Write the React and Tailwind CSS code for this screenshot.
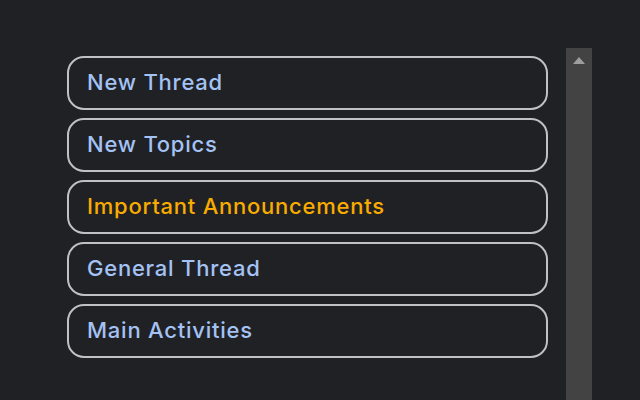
const App = () => {
  const items = [
    { label: 'New Thread' },
    { label: 'New Topics' },
    { label: 'Important Announcements', active: true },
    { label: 'General Thread' },
    { label: 'Main Activities' },
  ];

  return (
    <div className="w-[640px] h-[400px] overflow-hidden bg-[#202124] flex" style={{ fontFamily: 'Inter, "Noto Sans", sans-serif' }}>
      {/* Menu list */}
      <div className="pl-[67px] pt-[56px] flex flex-col gap-2">
        {items.map((item, index) => (
          <button
            key={index}
            className={`w-[481px] h-[54px] rounded-[17px] border-2 border-[#bfc1c4] flex items-center pl-[18px] pb-[1px] text-[22px] tracking-[0.035em] font-medium text-left ${
              item.active ? 'text-[#f9ab00]' : 'text-[#a4c2f4]'
            }`}
          >
            {item.label}
          </button>
        ))}
      </div>

      {/* Scrollbar */}
      <div className="ml-[18px] mt-[48px] w-[26px] bg-[#434343] flex justify-center pt-[9px]">
        <svg width="12" height="7" viewBox="0 0 12 7">
          <path d="M6 0 L12 7 L0 7 Z" fill="#9e9e9e" />
        </svg>
      </div>
    </div>
  );
};

export default App;
